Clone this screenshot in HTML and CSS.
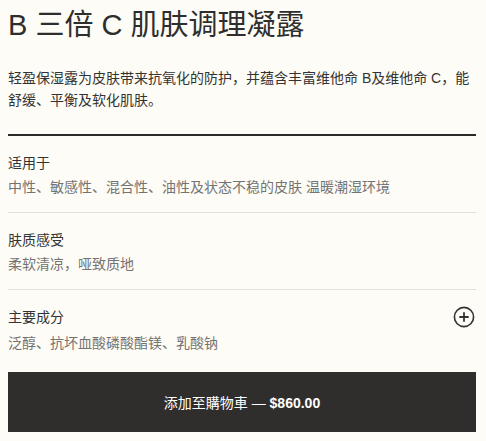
FILE: index.html
```html
<!DOCTYPE html>
<html lang="zh">
<head>
<meta charset="utf-8">
<link rel="stylesheet" href="styles.css">
</head>
<body>
<div class="page">
  <h1 class="title">B 三倍 C 肌肤调理凝露</h1>
  <p class="intro">轻盈保湿露为皮肤带来抗氧化的防护，并蕴含丰富维他命 B及维他命 C，能舒缓、平衡及软化肌肤。</p>
  <div class="details">
    <div class="row">
      <div class="label">适用于</div>
      <div class="value">中性、敏感性、混合性、油性及状态不稳的皮肤 温暖潮湿环境</div>
    </div>
    <div class="row">
      <div class="label">肤质感受</div>
      <div class="value">柔软清凉，哑致质地</div>
    </div>
    <div class="row last">
      <div class="label-line">
        <div class="label">主要成分</div>
        <svg class="plus" width="22" height="22" viewBox="0 0 22 22"><circle cx="11" cy="11" r="9.6" fill="none" stroke="#333" stroke-width="1.6"/><path d="M11 6.3v9.4M6.3 11h9.4" stroke="#333" stroke-width="1.8" fill="none"/></svg>
      </div>
      <div class="value">泛醇、抗坏血酸磷酸酯镁、乳酸钠</div>
    </div>
  </div>
  <button class="cart">添加至購物車 — <b>$860.00</b></button>
</div>
</body>
</html>
```
FILE: styles.css
```css
html, body { margin: 0; padding: 0; background: #fefcf6; }
body { font-family: "Liberation Sans", "Noto Sans CJK SC", sans-serif; color: #333; }
.page { width: 468px; padding: 0 8px; }
.title { margin: 0; padding-top: 8px; font-size: 29px; line-height: 34px; font-weight: normal; color: #2e2e2e; }
.intro { margin: 25px 0 0; font-size: 14px; line-height: 22px; color: #333; }
.details { margin-top: 23px; border-top: 2px solid #2b2a28; }
.row { padding: 15px 0 13px; border-bottom: 1px solid #e2e0da; }
.row.last { border-bottom: none; padding-bottom: 0; }
.last .value { margin-top: 2px; }
.label-line { display: flex; justify-content: space-between; align-items: center; }
.label { font-size: 14px; line-height: 24px; color: #333; }
.value { font-size: 14px; line-height: 24px; color: #737373; }
.plus { margin-right: 1px; }
.cart { display: block; width: 468px; height: 60px; margin-top: 17px; border: none; background: #302e2c; color: #fff; font-family: "Liberation Sans", "Noto Sans CJK SC", sans-serif; font-size: 14px; padding: 0; }
.cart b { font-weight: bold; }
```
